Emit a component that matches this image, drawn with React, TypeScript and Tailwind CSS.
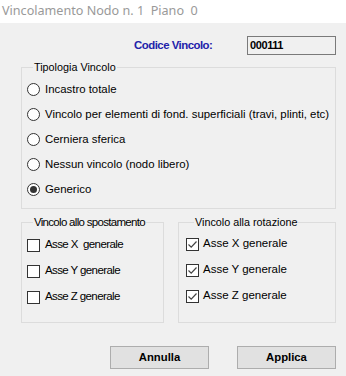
import React from "react";

const Radio = ({ checked, label }: { checked?: boolean; label: string }) => (
  <div className="flex items-center h-[25px]">
    <span className="w-[13px] h-[13px] rounded-full border border-[#333] bg-white flex items-center justify-center shrink-0">
      {checked && <span className="w-[7px] h-[7px] rounded-full bg-[#333]" />}
    </span>
    <span className="ml-[5px] text-[11.4px] text-black leading-none whitespace-nowrap">{label}</span>
  </div>
);

const Check = ({ checked, label, narrow }: { checked?: boolean; label: string; narrow?: boolean }) => (
  <div className="flex items-center h-[26px]">
    <span className="w-[13px] h-[13px] border border-[#333] bg-white flex items-center justify-center shrink-0">
      {checked && (
        <svg width="11" height="11" viewBox="0 0 11 11">
          <path d="M1.5 5.5 L4.2 8.2 L9.5 2.5" fill="none" stroke="#444" strokeWidth="1.2" />
        </svg>
      )}
    </span>
    <span
      className={
        narrow
          ? "ml-[5px] text-[11.5px] text-black leading-none whitespace-pre tracking-[-0.6px]"
          : "ml-[4px] text-[11.5px] text-black leading-none whitespace-pre"
      }
    >
      {label}
    </span>
  </div>
);

export default function App() {
  return (
    <div
      className="w-[346px] h-[376px] bg-[#f0f0f0] overflow-hidden"
      style={{ fontFamily: '"Liberation Sans", Arial, sans-serif' }}
    >
      <div
        className="h-[23px] bg-white pl-[2px] flex items-center text-[12.6px] text-[#999] whitespace-pre"
        style={{ fontFamily: '"Noto Sans", "Open Sans", sans-serif' }}
      >
        Vincolamento Nodo n. 1  Piano  0
      </div>

      <div className="flex items-center mt-[13px] h-[19px]">
        <span className="ml-[134px] text-[11.4px] font-bold text-[#2222aa] tracking-[-0.5px] leading-none">
          Codice Vincolo:
        </span>
        <div className="ml-auto mr-[10px] w-[89px] h-[19px] border border-[#7a7a7a] bg-[#f0f0f0] flex items-center pl-[2px]">
          <span className="text-[11px] font-bold text-black tracking-[-0.4px] leading-none">000111</span>
        </div>
      </div>

      <fieldset className="ml-[21px] mt-[5px] w-[315px] h-[149px] border border-[#dcdcdc] pl-[5px]">
        <legend className="ml-[6px] px-[1px] text-[10.8px] text-black leading-[14px]">Tipologia Vincolo</legend>
        <div className="flex flex-col mt-[3px]">
          <Radio label="Incastro totale" />
          <Radio label="Vincolo per elementi di fond. superficiali (travi, plinti, etc)" />
          <Radio label="Cerniera sferica" />
          <Radio label="Nessun vincolo (nodo libero)" />
          <Radio checked label="Generico" />
        </div>
      </fieldset>

      <div className="flex mt-[6px] ml-[21px] gap-[14px]">
        <fieldset className="w-[143px] h-[108px] border border-[#dcdcdc] pl-[5px]">
          <legend
            className="ml-[6px] px-[1px] text-[11.5px] text-black leading-[14px] tracking-[-0.7px]"
          >
            Vincolo allo spostamento
          </legend>
          <div className="flex flex-col mt-[3px]">
            <Check narrow label="Asse X  generale" />
            <Check narrow label="Asse Y generale" />
            <Check narrow label="Asse Z generale" />
          </div>
        </fieldset>
        <fieldset className="w-[158px] h-[108px] border border-[#dcdcdc] pl-[7px]">
          <legend className="ml-[8px] px-[1px] text-[10.8px] text-black leading-[14px]">Vincolo alla rotazione</legend>
          <div className="flex flex-col mt-[2px]">
            <Check checked label="Asse X generale" />
            <Check checked label="Asse Y generale" />
            <Check checked label="Asse Z generale" />
          </div>
        </fieldset>
      </div>

      <div className="flex mt-[23px] ml-[110px] gap-[28px]">
        <button className="w-[99px] h-[23px] bg-[#e1e1e1] border border-[#adadad] text-[11.3px] font-bold text-black leading-none">
          Annulla
        </button>
        <button className="w-[99px] h-[23px] bg-[#e1e1e1] border border-[#adadad] text-[11.3px] font-bold text-black leading-none">
          Applica
        </button>
      </div>
    </div>
  );
}
